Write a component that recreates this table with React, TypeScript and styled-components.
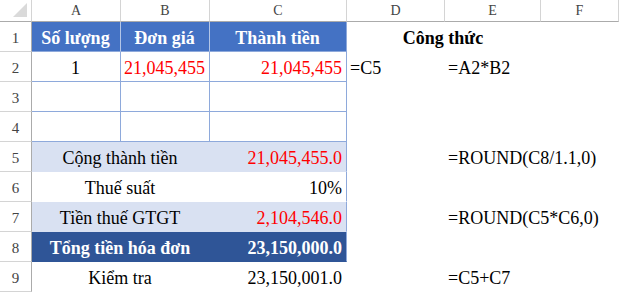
import React from 'react';
import styled, { createGlobalStyle } from 'styled-components';

const GlobalStyle = createGlobalStyle`
  html, body {
    margin: 0;
    padding: 0;
    background: #ffffff;
  }
  body {
    width: 619px;
    height: 292px;
    overflow: hidden;
    font-family: "Liberation Serif", "Times New Roman", serif;
  }
`;

const BLUE = '#4472C4';
const DARK = '#2F5597';
const LIGHT = '#D9E1F2';
const LINE = '#8EA9DB';
const RED = '#FF0000';

const Sheet = styled.div`
  display: grid;
  grid-template-columns: 32px 89px 89px 137px 98px 96px 78px;
  grid-template-rows: 22px repeat(9, 30px);
  width: 619px;
  height: 292px;
  overflow: hidden;
  font-family: "Liberation Serif", "Times New Roman", serif;
`;

const Corner = styled.div`
  display: flex;
  align-items: flex-end;
  justify-content: flex-end;
  padding: 0 4px 4px 0;
  border-right: 1px solid #d4d4d4;
  border-bottom: 1px solid #ababab;
  box-sizing: border-box;
`;

const ColHead = styled.div`
  display: flex;
  align-items: center;
  justify-content: center;
  border-right: 1px solid #d4d4d4;
  border-bottom: 1px solid #ababab;
  box-sizing: border-box;
  color: #444444;
  font-size: 14px;
  padding-top: 1px;
`;

const RowHead = styled.div`
  display: flex;
  align-items: flex-end;
  justify-content: center;
  padding-bottom: 3px;
  border-right: 1px solid #ababab;
  border-bottom: 1px solid #d4d4d4;
  box-sizing: border-box;
  color: #444444;
  font-size: 15px;
  line-height: 20px;
`;

type CellProps = {
  $bg?: string;
  $color?: string;
  $bold?: boolean;
  $align?: 'left' | 'center' | 'right';
  $br?: string;
  $bb?: string;
  $span?: number;
};

const Cell = styled.div<CellProps>`
  display: flex;
  align-items: flex-end;
  justify-content: ${(p) =>
    p.$align === 'right' ? 'flex-end' : p.$align === 'center' ? 'center' : 'flex-start'};
  grid-column: span ${(p) => p.$span || 1};
  padding: 0 4px 2px 3px;
  box-sizing: border-box;
  background: ${(p) => p.$bg || 'transparent'};
  color: ${(p) => p.$color || '#000000'};
  font-weight: ${(p) => (p.$bold ? 700 : 400)};
  font-size: 18px;
  line-height: 22px;
  white-space: nowrap;
  overflow: visible;
  border-right: 1px solid ${(p) => p.$br || 'transparent'};
  border-bottom: 1px solid ${(p) => p.$bb || 'transparent'};
`;

const CornerMark = () => (
  <svg width="14" height="14" viewBox="0 0 14 14">
    <polygon points="14,0 14,14 0,14" fill="#dadada" />
  </svg>
);

const columns = ['A', 'B', 'C', 'D', 'E', 'F'];

export default function App() {
  return (
    <>
      <GlobalStyle />
      <Sheet>
        <Corner>
          <CornerMark />
        </Corner>
        {columns.map((c) => (
          <ColHead key={c}>{c}</ColHead>
        ))}

        {/* row 1 */}
        <RowHead>1</RowHead>
        <Cell $bg={BLUE} $color="#fff" $bold $align="center" $br="#b4c6e7" $bb={LINE}>Số lượng</Cell>
        <Cell $bg={BLUE} $color="#fff" $bold $align="center" $br="#b4c6e7" $bb={LINE}>Đơn giá</Cell>
        <Cell $bg={BLUE} $color="#fff" $bold $align="center" $br={LINE} $bb={LINE}>Thành tiền</Cell>
        <Cell $bold $align="center" $span={2}>Công thức</Cell>
        <Cell />

        {/* row 2 */}
        <RowHead>2</RowHead>
        <Cell $align="center" $br={LINE} $bb={LINE}>1</Cell>
        <Cell $align="center" $color={RED} $br={LINE} $bb={LINE}>21,045,455</Cell>
        <Cell $align="right" $color={RED} $br={LINE} $bb={LINE}>21,045,455</Cell>
        <Cell>=C5</Cell>
        <Cell>=A2*B2</Cell>
        <Cell />

        {/* rows 3-4 */}
        {[3, 4].map((r) => (
          <React.Fragment key={r}>
            <RowHead>{r}</RowHead>
            <Cell $br={LINE} $bb={LINE} />
            <Cell $br={LINE} $bb={LINE} />
            <Cell $br={LINE} $bb={LINE} />
            <Cell />
            <Cell />
            <Cell />
          </React.Fragment>
        ))}

        {/* row 5 */}
        <RowHead>5</RowHead>
        <Cell $bg={LIGHT} $align="center" $span={2}>Cộng thành tiền</Cell>
        <Cell $bg={LIGHT} $align="right" $color={RED} $br={LINE}>21,045,455.0</Cell>
        <Cell />
        <Cell>=ROUND(C8/1.1,0)</Cell>
        <Cell />

        {/* row 6 */}
        <RowHead>6</RowHead>
        <Cell $align="center" $span={2}>Thuế suất</Cell>
        <Cell $align="right" $br={LINE}>10%</Cell>
        <Cell />
        <Cell />
        <Cell />

        {/* row 7 */}
        <RowHead>7</RowHead>
        <Cell $bg={LIGHT} $align="center" $span={2}>Tiền thuế GTGT</Cell>
        <Cell $bg={LIGHT} $align="right" $color={RED} $br={LINE}>2,104,546.0</Cell>
        <Cell />
        <Cell>=ROUND(C5*C6,0)</Cell>
        <Cell />

        {/* row 8 */}
        <RowHead>8</RowHead>
        <Cell $bg={DARK} $color="#fff" $bold $align="center" $span={2}>Tổng tiền hóa đơn</Cell>
        <Cell $bg={DARK} $color="#fff" $bold $align="right" $br={LINE}>23,150,000.0</Cell>
        <Cell />
        <Cell />
        <Cell />

        {/* row 9 */}
        <RowHead>9</RowHead>
        <Cell $align="center" $span={2}>Kiểm tra</Cell>
        <Cell $align="right">23,150,001.0</Cell>
        <Cell />
        <Cell>=C5+C7</Cell>
        <Cell />
      </Sheet>
    </>
  );
}
